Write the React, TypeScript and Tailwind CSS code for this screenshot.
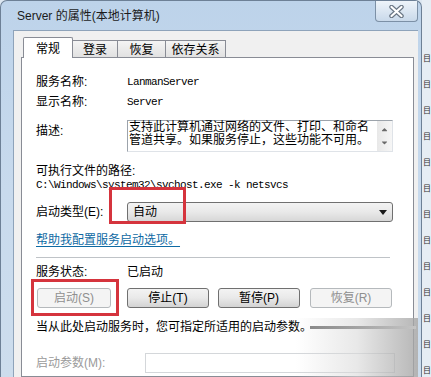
import { FaCaretDown, FaCaretUp } from 'react-icons/fa';

const mono = "font-['Liberation_Mono','Noto_Sans_CJK_SC',monospace] text-[11px] tracking-[-0.6px]";

const Tab = ({ label, width, active }: { label: string; width: string; active?: boolean }) =>
  active ? (
    <div className={`${width} flex h-[21px] items-start justify-center rounded-t-[2px] border border-b-0 border-[#898c95] bg-white pt-[4px] leading-[14px]`}>
      {label}
    </div>
  ) : (
    <div className={`${width} mb-px flex h-[17px] items-start justify-center border-r border-t border-[#898c95] bg-gradient-to-b from-[#f4f4f4] to-[#e1e1e1] pt-[2px] leading-[14px]`}>
      {label}
    </div>
  );

const Button = ({ label, width, disabled }: { label: string; width: string; disabled?: boolean }) => (
  <div
    className={`${width} flex h-[20px] items-center justify-center rounded-[3px] border leading-[14px] ${
      disabled
        ? 'border-[#b5b9bc] bg-[#f4f4f4] text-[#8f8f8f]'
        : 'border-[#707070] bg-gradient-to-b from-[#f3f3f3] via-[#e9e9e9] to-[#d3d3d3] text-black'
    }`}
  >
    {label}
  </div>
);

export default function App() {
  return (
    <div className="relative flex h-[377px] w-[431px] overflow-hidden bg-[#dde7f1] font-['Liberation_Sans','Noto_Sans_CJK_SC',sans-serif] text-[12px] text-black">
      {/* dialog window */}
      <div className="flex h-[377px] w-[422px] flex-col rounded-t-[7px] border-l border-r border-t border-[#6d8096] bg-gradient-to-b from-[#bdd3ea] via-[#c8daed] to-[#cddded]">
        {/* title bar */}
        <div className="flex h-[29px] items-start justify-between">
          <div className="pl-[16px] pt-[7px] leading-[16px] text-[#1b1b1b]">Server 的属性(本地计算机)</div>
          <div className="mr-[3px] flex h-[21px] w-[43px] items-center justify-center rounded-b-[4px] border border-t-0 border-[#7c90a6] bg-gradient-to-b from-[#eef4fa] to-[#c9d9ea]">
            <svg width="15" height="13" viewBox="0 0 15 13">
              <path d="M2.5 2 L12.5 11 M12.5 2 L2.5 11" stroke="#6b7785" strokeWidth="4.5" strokeLinecap="round" />
              <path d="M2.5 2 L12.5 11 M12.5 2 L2.5 11" stroke="#ffffff" strokeWidth="2.2" strokeLinecap="round" />
            </svg>
          </div>
        </div>

        {/* client area */}
        <div className="ml-[12px] mr-[3px] flex flex-1 flex-col border-l border-t border-[#8ea3ba] bg-[#f0f0f0] pl-[7px] pr-[4px] pt-[6px]">
          {/* tabs */}
          <div className="relative z-10 -mb-px flex h-[21px] items-end pl-[2px]">
            <Tab label="常规" width="w-[50px]" active />
            <Tab label="登录" width="w-[45px]" />
            <Tab label="恢复" width="w-[48px]" />
            <Tab label="依存关系" width="w-[60px]" />
          </div>

          {/* tab panel */}
          <div className="flex flex-1 flex-col border border-[#898c95] bg-white pl-[14px]">
            <div className="mt-[14px] flex h-[20px] items-center">
              <div className="w-[91px]">服务名称:</div>
              <div className={mono}>LanmanServer</div>
            </div>
            <div className="flex h-[20px] items-center">
              <div className="w-[91px]">显示名称:</div>
              <div className={mono}>Server</div>
            </div>

            <div className="mt-[8px] flex items-start">
              <div className="mt-[1px] w-[91px] leading-[20px]">描述:</div>
              <div className="flex h-[32px] w-[266px] border border-[#9ca3ab] border-b-[#dfe3e8] border-r-[#dfe3e8] bg-white">
                <div className="flex-1 whitespace-nowrap pl-[1px] leading-[13px]">
                  <div>支持此计算机通过网络的文件、打印、和命名</div>
                  <div>管道共享。如果服务停止，这些功能不可用。</div>
                </div>
                <div className="flex w-[15px] flex-col items-center justify-between bg-gradient-to-r from-[#e8e8e8] to-[#f6f6f6] py-[4px] text-[#6a6a6a]">
                  <FaCaretUp size={9} />
                  <FaCaretDown size={9} />
                </div>
              </div>
            </div>

            <div className="mt-[12px] leading-[14px]">可执行文件的路径:</div>
            <div className={`${mono} leading-[14px]`}>C:\Windows\system32\svchost.exe -k netsvcs</div>

            <div className="mt-[10px] flex h-[20px] items-center">
              <div className="w-[91px]">启动类型(E):</div>
              <div className="flex h-[20px] w-[266px] items-center justify-between rounded-[3px] border border-[#707070] bg-gradient-to-b from-[#f3f3f3] via-[#e9e9e9] to-[#d7d7d7] pl-[5px] pr-[5px]">
                <span>自动</span>
                <svg width="8" height="5" viewBox="0 0 8 5">
                  <path d="M0 0 H8 L4 5 Z" fill="#1a1a1a" />
                </svg>
              </div>
            </div>

            <div className="mt-[11px] leading-[14px] text-[#0e6aa3] underline underline-offset-2">帮助我配置服务启动选项。</div>

            <div className="mt-[10px] h-px w-[354px] bg-[#bfc3c7]" />

            <div className="mt-[7px] flex leading-[14px]">
              <div className="w-[91px]">服务状态:</div>
              <div>已启动</div>
            </div>

            <div className="mt-[9px] flex">
              <div className="ml-[1px]">
                <Button label="启动(S)" width="w-[74px]" disabled />
              </div>
              <div className="ml-[16px]">
                <Button label="停止(T)" width="w-[82px]" />
              </div>
              <div className="ml-[9px]">
                <Button label="暂停(P)" width="w-[82px]" />
              </div>
              <div className="ml-[10px]">
                <Button label="恢复(R)" width="w-[82px]" disabled />
              </div>
            </div>

            <div className="mt-[12px] whitespace-nowrap leading-[14px]">当从此处启动服务时，您可指定所适用的启动参数。</div>

            <div className="mt-[19px] flex h-[20px] items-center">
              <div className="w-[109px] text-[#9a9a9a]">启动参数(M):</div>
              <div className="h-[20px] w-[250px] border border-[#d4d7da] bg-white" />
            </div>
          </div>
        </div>
      </div>

      {/* neighbouring window edge */}
      <div className="flex h-[377px] w-[9px] flex-col overflow-hidden bg-[#e6edf4] pt-[46px] text-[8px] leading-[26px] text-[#333]">
        {Array.from({ length: 13 }).map((_, i) => (
          <div key={i} className="pl-[1px]">目</div>
        ))}
      </div>

      {/* annotation boxes */}
      <div className="absolute left-[109px] top-[187px] h-[37px] w-[77px] border-[3px] border-[#d5343d]" />
      <div className="absolute left-[31px] top-[279px] h-[37px] w-[88px] border-[3px] border-[#d5343d]" />

      {/* watermark smear */}
      <div className="absolute left-[296px] top-[318px] h-[59px] w-[122px] bg-gradient-to-r from-white/0 via-[#d9d9d9]/60 to-[#a4a4a4]/80" />
      <div className="absolute left-[310px] top-[326px] h-[3px] w-[106px] bg-gradient-to-r from-[#8a8a8a] to-[#c4c4c4]" />
    </div>
  );
}
